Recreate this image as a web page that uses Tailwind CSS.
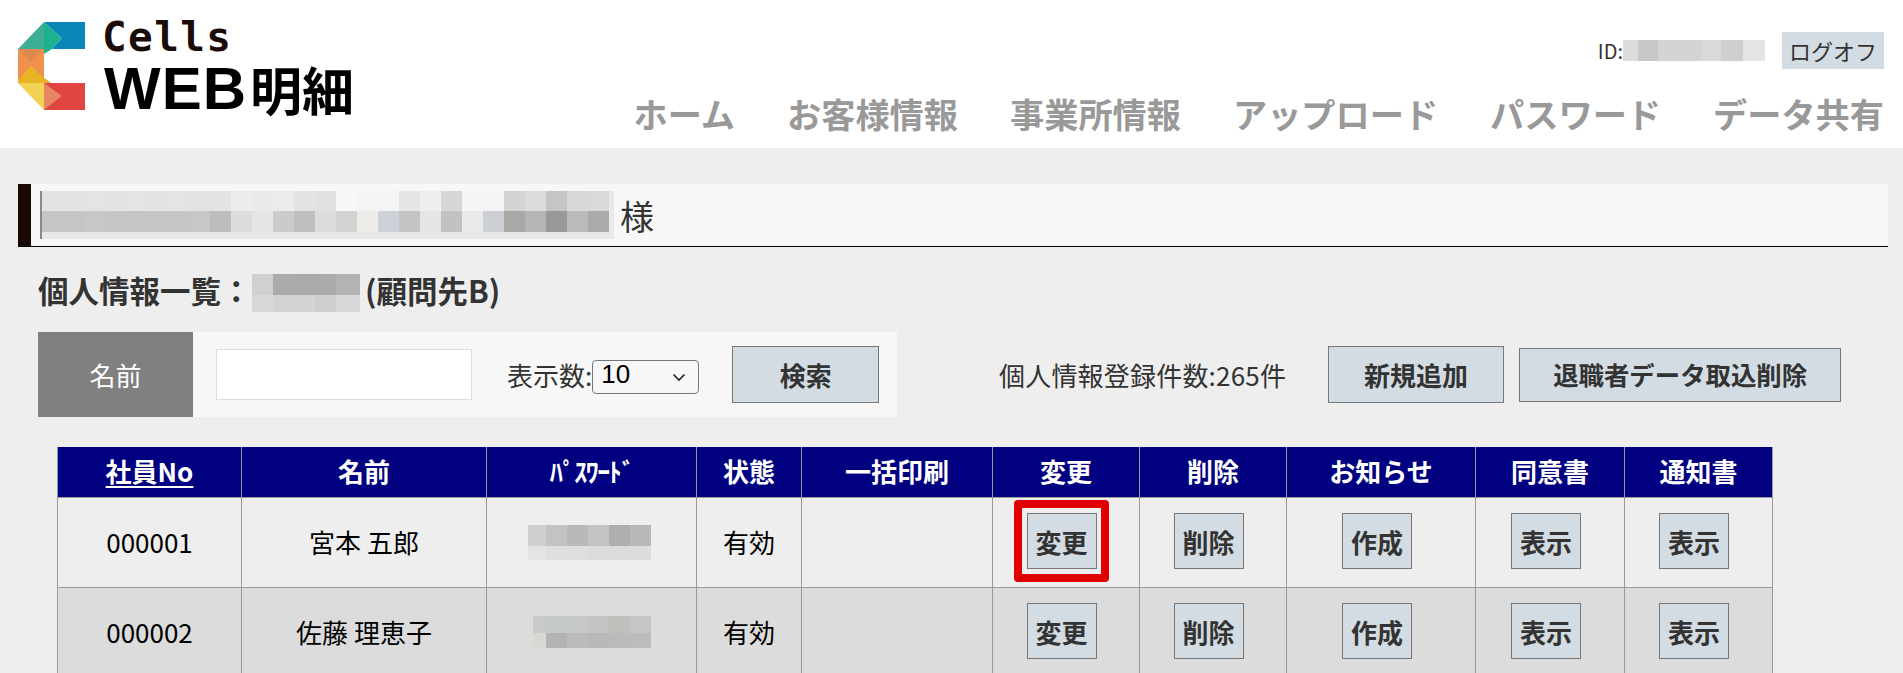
<!DOCTYPE html>
<html lang="ja">
<head>
<meta charset="utf-8">
<title>Cells WEB明細</title>
<script src="https://cdn.jsdelivr.net/npm/@tailwindcss/browser@4"></script>
</head>
<body class="m-0">
<div class="h-[673px] w-[1903px] overflow-hidden bg-[#eeeeee] font-['Noto_Sans_CJK_JP','Noto_Sans',sans-serif] text-[26px] text-[#333333]">
  <!-- header -->
  <header class="flex h-[148px] justify-between bg-white">
    <div class="flex pl-[18px] pt-[22px]">
      <svg class="h-[88px] w-[67px] shrink-0" viewBox="18 22 67 88" aria-label="Cells logo">
        <polygon points="44,22 85,22 85,49 52,49 61.7,38" fill="#0a86b8"/>
        <polygon points="44,22 18,49 44,49" fill="#3fae98"/>
        <polygon points="44,22 61.7,38 52,49 44,54" fill="#1eb18d"/>
        <polygon points="18,49 44,49 44,78 51,83 18,83" fill="#f0904a"/>
        <polygon points="18,49 44,49 31,62" fill="#dd8a4e"/>
        <polygon points="31,66 44,78 51,83 18,83 18,80" fill="#e8b325"/>
        <polygon points="18,83 44,83 44,110" fill="#f2d253"/>
        <polygon points="44,83 85,83 85,110 44,110" fill="#e14541"/>
        <polygon points="44,83 61.7,96 44,110" fill="#e68663"/>
      </svg>
      <div class="ml-[17px] flex flex-col">
        <div class="-mt-[1px] h-[35px] font-['DejaVu_Sans_Mono',monospace] text-[41px] font-bold leading-[32px] tracking-[1.4px] text-[#1a0a0a]">Cells</div>
        <div class="mt-[5px] flex h-[56px] items-center font-bold leading-[48px] text-black">
          <span class="ml-[2px] font-['Liberation_Sans',sans-serif] text-[60px] tracking-[1px]">WEB</span><span class="ml-[3px] text-[52px]">明細</span>
        </div>
      </div>
    </div>
    <div class="flex flex-col items-end pr-[19px] pt-[32px]">
      <div class="flex h-[37px] items-center">
        <span class="text-[20px]">ID:</span>
        <div class="flex h-[21px] w-[142px]">
          <div class="w-[15px] bg-[#dcdcdc]"></div><div class="w-[20px] bg-[#c8c8c8]"></div><div class="w-[43px] bg-[#d4d4d4]"></div><div class="w-[20px] bg-[#d9d9d9]"></div><div class="w-[22px] bg-[#cfcfcf]"></div><div class="w-[22px] bg-[#e4e4e4]"></div>
        </div>
        <button class="ml-[17px] h-[37px] w-[102px] bg-[#d3dce2] text-[22px] text-[#333333]">ログオフ</button>
      </div>
      <nav class="mt-[21px] flex gap-[52px] text-[34.2px] font-bold leading-[46px] text-[#999999]">
        <span>ホーム</span><span>お客様情報</span><span>事業所情報</span><span>アップロード</span><span>パスワード</span><span>データ共有</span>
      </nav>
    </div>
  </header>

  <!-- title bar -->
  <div class="ml-[18px] mr-[15px] mt-[36px] flex h-[63px] items-center border-b border-l-[13px] border-b-black border-l-[#1a0a05] bg-[#f7f7f7] pl-[9px]">
    <div class="flex h-[48px] w-[574px] flex-col border-l-2 border-l-[#8a8a8a] bg-[#e8e8e8]">
      <div class="flex h-[20px]">
        <div class="h-full w-[21px] bg-[#e3e3e3]"></div><div class="h-full w-[21px] bg-[#e2e3e2]"></div><div class="h-full w-[21px] bg-[#e3e4e4]"></div><div class="h-full w-[21px] bg-[#e2e3e3]"></div><div class="h-full w-[21px] bg-[#e3e4e3]"></div><div class="h-full w-[21px] bg-[#e2e4e4]"></div><div class="h-full w-[21px] bg-[#e3e4e4]"></div><div class="h-full w-[21px] bg-[#e3e3e3]"></div><div class="h-full w-[21px] bg-[#e3e3e3]"></div><div class="h-full w-[21px] bg-[#ececec]"></div><div class="h-full w-[21px] bg-[#eaeaea]"></div><div class="h-full w-[21px] bg-[#ebebeb]"></div><div class="h-full w-[21px] bg-[#e3e3e3]"></div><div class="h-full w-[21px] bg-[#e1e1e1]"></div><div class="h-full w-[21px] bg-[#f8f8f8]"></div><div class="h-full w-[21px] bg-[#f5f4f2]"></div><div class="h-full w-[21px] bg-[#f2f4f6]"></div><div class="h-full w-[21px] bg-[#e6e6e4]"></div><div class="h-full w-[21px] bg-[#eef0ef]"></div><div class="h-full w-[21px] bg-[#d6d6d6]"></div><div class="h-full w-[21px] bg-[#f6f4f2]"></div><div class="h-full w-[21px] bg-[#f2f4f6]"></div><div class="h-full w-[21px] bg-[#d4d4d2]"></div><div class="h-full w-[21px] bg-[#dcdcdc]"></div><div class="h-full w-[21px] bg-[#c4c6c6]"></div><div class="h-full w-[21px] bg-[#d8d8d8]"></div><div class="h-full w-[21px] bg-[#d8d9da]"></div>
      </div>
      <div class="flex h-[21px]">
        <div class="h-full w-[21px] bg-[#c5c5c5]"></div><div class="h-full w-[21px] bg-[#c4c5c5]"></div><div class="h-full w-[21px] bg-[#c6c8c8]"></div><div class="h-full w-[21px] bg-[#c5c5c5]"></div><div class="h-full w-[21px] bg-[#c5c5c5]"></div><div class="h-full w-[21px] bg-[#c5c5c5]"></div><div class="h-full w-[21px] bg-[#c5c6c6]"></div><div class="h-full w-[21px] bg-[#c5c7c9]"></div><div class="h-full w-[21px] bg-[#bdbdbd]"></div><div class="h-full w-[21px] bg-[#dcdcdc]"></div><div class="h-full w-[21px] bg-[#e5e5e5]"></div><div class="h-full w-[21px] bg-[#cacccc]"></div><div class="h-full w-[21px] bg-[#bfbfbf]"></div><div class="h-full w-[21px] bg-[#dddddd]"></div><div class="h-full w-[21px] bg-[#d2d2d2]"></div><div class="h-full w-[21px] bg-[#eeece8]"></div><div class="h-full w-[21px] bg-[#cdd0d6]"></div><div class="h-full w-[21px] bg-[#c4c4c2]"></div><div class="h-full w-[21px] bg-[#e6e6e6]"></div><div class="h-full w-[21px] bg-[#c2c2c2]"></div><div class="h-full w-[21px] bg-[#eae9e7]"></div><div class="h-full w-[21px] bg-[#ccd0d4]"></div><div class="h-full w-[21px] bg-[#a8a8a6]"></div><div class="h-full w-[21px] bg-[#b5b5b5]"></div><div class="h-full w-[21px] bg-[#999999]"></div><div class="h-full w-[21px] bg-[#b9bbbb]"></div><div class="h-full w-[21px] bg-[#a9abab]"></div>
      </div>
    </div>
    <span class="ml-[6px] pt-[2px] text-[34px] leading-none">様</span>
  </div>

  <!-- heading -->
  <div class="ml-[38px] mt-[27px] flex h-[38px] items-center text-[30px] font-bold leading-none">
    <span class="mb-[5px] w-[214px] text-[30.5px]">個人情報一覧：</span>
    <div class="flex h-[38px] w-[108px] flex-col">
      <div class="flex h-[21px]"><div class="w-[21px] bg-[#d0d0d0]"></div><div class="w-[21px] bg-[#adabaa]"></div><div class="w-[21px] bg-[#a9aaaa]"></div><div class="w-[21px] bg-[#acabaa]"></div><div class="w-[24px] bg-[#b3b3b3]"></div></div>
      <div class="flex h-[17px]"><div class="w-[21px] bg-[#d8d8d8]"></div><div class="w-[21px] bg-[#d2d2d2]"></div><div class="w-[21px] bg-[#d4d4d4]"></div><div class="w-[21px] bg-[#cecece]"></div><div class="w-[24px] bg-[#d8d8d8]"></div></div>
    </div>
    <span class="mb-[5px] ml-[5px] text-[30.5px]">(顧問先B)</span>
  </div>

  <!-- search row -->
  <div class="ml-[38px] mt-[20px] flex h-[85px] items-center">
    <div class="flex h-[85px] w-[859px] items-center bg-[#f7f7f7]">
      <div class="flex h-full w-[155px] items-center justify-center bg-[#808080] text-white">名前</div>
      <input type="text" class="ml-[23px] h-[51px] w-[256px] border border-[#dddddd] bg-white" aria-label="名前">
      <span class="ml-[35px]">表示数:</span>
      <div class="relative mt-[4px] h-[34px] w-[107px] overflow-hidden rounded-[4px] border border-[#767676]">
        <select class="block h-[27px] w-full appearance-none bg-transparent pl-[8px] font-['Liberation_Sans',sans-serif] text-[26px] leading-none text-black" aria-label="表示数"><option>10</option></select>
        <svg class="absolute right-[12px] top-[12px] h-[9px] w-[14px]" viewBox="0 0 14 9" fill="none" stroke="#222222" stroke-width="1.7"><path d="M1.5 1.5 7 7 12.5 1.5"/></svg>
      </div>
      <button class="ml-[33px] h-[57px] w-[147px] border border-[#777777] bg-[#d3dce2] text-[26px] font-bold text-[#333333]">検索</button>
    </div>
    <span class="ml-[102px] whitespace-nowrap tracking-[0.2px]">個人情報登録件数:265件</span>
    <button class="ml-[42px] h-[57px] w-[176px] border border-[#777777] bg-[#d3dce2] text-[26px] font-bold text-[#333333]">新規追加</button>
    <button class="ml-[15px] h-[54px] w-[322px] border border-[#777777] bg-[#d3dce2] text-[25.4px] font-bold text-[#333333]">退職者データ取込削除</button>
  </div>

  <!-- table -->
  <table class="ml-[57px] mt-[30px] w-[1715px] table-fixed border-collapse text-center text-black">
    <colgroup>
      <col class="w-[184px]"><col class="w-[245px]"><col class="w-[210px]"><col class="w-[105px]"><col class="w-[191px]"><col class="w-[147px]"><col class="w-[147px]"><col class="w-[189px]"><col class="w-[149px]"><col class="w-[148px]">
    </colgroup>
    <thead>
      <tr class="h-[50px] bg-[#000080] text-white">
        <th class="border border-t-0 border-[#999999] pb-[2px] font-bold underline underline-offset-[4px]">社員No</th>
        <th class="border border-t-0 border-[#999999] pb-[2px] font-bold">名前</th>
        <th class="border border-t-0 border-[#999999] pb-[2px] font-bold tracking-[-1.5px]">ﾊﾟｽﾜｰﾄﾞ</th>
        <th class="border border-t-0 border-[#999999] pb-[2px] font-bold">状態</th>
        <th class="border border-t-0 border-[#999999] pb-[2px] font-bold">一括印刷</th>
        <th class="border border-t-0 border-[#999999] pb-[2px] font-bold">変更</th>
        <th class="border border-t-0 border-[#999999] pb-[2px] font-bold">削除</th>
        <th class="border border-t-0 border-[#999999] pb-[2px] font-bold">お知らせ</th>
        <th class="border border-t-0 border-[#999999] pb-[2px] font-bold">同意書</th>
        <th class="border border-t-0 border-[#999999] pb-[2px] font-bold">通知書</th>
      </tr>
    </thead>
    <tbody>
      <tr class="h-[90px] bg-[#eeeeee]">
        <td class="border border-[#999999] pb-[2px]">000001</td>
        <td class="border border-[#999999] pb-[2px]">宮本 五郎</td>
        <td class="border border-[#999999]">
          <div class="ml-[41px] flex h-[35px] w-[123px] flex-col">
            <div class="flex h-[21px]"><div class="w-[18px] bg-[#cfcfcf]"></div><div class="w-[21px] bg-[#c2c4c4]"></div><div class="w-[21px] bg-[#b8baba]"></div><div class="w-[21px] bg-[#c2c4c5]"></div><div class="w-[21px] bg-[#aeafaf]"></div><div class="w-[21px] bg-[#b9b9ba]"></div></div>
            <div class="flex h-[14px]"><div class="w-[18px] bg-[#e4e4e4]"></div><div class="w-[21px] bg-[#dedfdf]"></div><div class="w-[21px] bg-[#dedfdf]"></div><div class="w-[21px] bg-[#dadcdc]"></div><div class="w-[21px] bg-[#dcdcdc]"></div><div class="w-[21px] bg-[#dcdcdc]"></div></div>
          </div>
        </td>
        <td class="border border-[#999999] pb-[2px]">有効</td>
        <td class="border border-[#999999]"></td>
        <td class="border border-[#999999] pb-[2px] pr-[9px]">
          <button class="relative mx-auto block h-[56px] w-[70px] border border-[#777777] bg-[#d3dce2] text-[26px] font-bold text-[#333333]">変更
            <span class="absolute -bottom-[14px] -left-[14px] -right-[13px] -top-[14px] rounded-[4px] border-[8px] border-[#e00000]"></span>
          </button>
        </td>
        <td class="border border-[#999999] pb-[2px] pr-[9px]"><button class="mx-auto block h-[56px] w-[70px] border border-[#777777] bg-[#d3dce2] text-[26px] font-bold text-[#333333]">削除</button></td>
        <td class="border border-[#999999] pb-[2px] pr-[8px]"><button class="mx-auto block h-[56px] w-[70px] border border-[#777777] bg-[#d3dce2] text-[26px] font-bold text-[#333333]">作成</button></td>
        <td class="border border-[#999999] pb-[2px] pr-[8px]"><button class="mx-auto block h-[56px] w-[70px] border border-[#777777] bg-[#d3dce2] text-[26px] font-bold text-[#333333]">表示</button></td>
        <td class="border border-[#999999] pb-[2px] pr-[9px]"><button class="mx-auto block h-[56px] w-[70px] border border-[#777777] bg-[#d3dce2] text-[26px] font-bold text-[#333333]">表示</button></td>
      </tr>
      <tr class="h-[90px] bg-[#dcdcdc]">
        <td class="border border-[#999999] pb-[2px]">000002</td>
        <td class="border border-[#999999] pb-[2px]">佐藤 理恵子</td>
        <td class="border border-[#999999]">
          <div class="ml-[46px] flex h-[32px] w-[118px] flex-col">
            <div class="flex h-[17px]"><div class="w-[13px] bg-[#c9cbcb]"></div><div class="w-[21px] bg-[#c6c9c9]"></div><div class="w-[21px] bg-[#c6c7c7]"></div><div class="w-[21px] bg-[#c1c3c4]"></div><div class="w-[21px] bg-[#bfbfbc]"></div><div class="w-[21px] bg-[#c4c5c5]"></div></div>
            <div class="flex h-[15px]"><div class="w-[13px] bg-[#d8d8d5]"></div><div class="w-[21px] bg-[#b2b4b4]"></div><div class="w-[21px] bg-[#bbbbbb]"></div><div class="w-[21px] bg-[#b8b9ba]"></div><div class="w-[21px] bg-[#bbbbbb]"></div><div class="w-[21px] bg-[#bbbdbd]"></div></div>
          </div>
        </td>
        <td class="border border-[#999999] pb-[2px]">有効</td>
        <td class="border border-[#999999]"></td>
        <td class="border border-[#999999] pb-[2px] pr-[9px]"><button class="mx-auto block h-[56px] w-[70px] border border-[#777777] bg-[#d3dce2] text-[26px] font-bold text-[#333333]">変更</button></td>
        <td class="border border-[#999999] pb-[2px] pr-[9px]"><button class="mx-auto block h-[56px] w-[70px] border border-[#777777] bg-[#d3dce2] text-[26px] font-bold text-[#333333]">削除</button></td>
        <td class="border border-[#999999] pb-[2px] pr-[8px]"><button class="mx-auto block h-[56px] w-[70px] border border-[#777777] bg-[#d3dce2] text-[26px] font-bold text-[#333333]">作成</button></td>
        <td class="border border-[#999999] pb-[2px] pr-[8px]"><button class="mx-auto block h-[56px] w-[70px] border border-[#777777] bg-[#d3dce2] text-[26px] font-bold text-[#333333]">表示</button></td>
        <td class="border border-[#999999] pb-[2px] pr-[9px]"><button class="mx-auto block h-[56px] w-[70px] border border-[#777777] bg-[#d3dce2] text-[26px] font-bold text-[#333333]">表示</button></td>
      </tr>
    </tbody>
  </table>
</div>
</body>
</html>
